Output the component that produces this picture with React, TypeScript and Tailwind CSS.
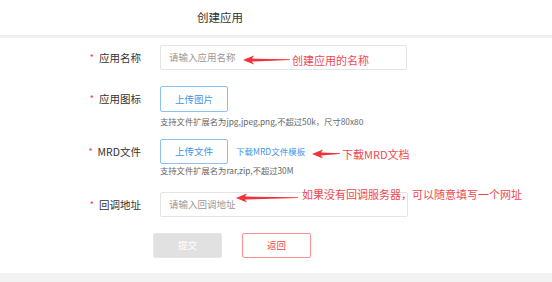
import React from 'react'

const font = { fontFamily: '"Noto Sans CJK SC", "Liberation Sans", sans-serif' }

function Arrow({ width }: { width: number }) {
  return (
    <svg width={width} height="10" viewBox={`0 0 ${width} 10`} className="block">
      <polygon points={`0,5 11,0.5 9,3.6 ${width},4.3 ${width},5 9,6.6 11,9.5`} fill="#f0333a" />
    </svg>
  )
}

function Label({ text }: { text: string }) {
  return (
    <div className="w-[160px] shrink-0 flex items-center justify-end pr-[19px] text-[10.5px] text-[#333]">
      <span className="text-[#f04134] text-[9px] mr-[5px]">*</span>
      <span>{text}</span>
    </div>
  )
}

export default function App() {
  return (
    <div className="relative w-[552px] h-[282px] bg-white overflow-hidden" style={font}>
      <div className="h-[35px] flex items-center pl-[197px] text-[11.5px] text-[#333]">创建应用</div>
      <div className="h-[3px] bg-[#f0f0f0]" />

      <div className="flex flex-col">
        <div className="flex items-center mt-[7px] h-[25px]">
          <Label text="应用名称" />
          <div className="w-[247px] h-[25px] border border-[#e4e4e4] rounded-[2px] flex items-center pl-[8px] text-[9.5px] text-[#999]">
            请输入应用名称
          </div>
        </div>

        <div className="flex items-center mt-[16px] h-[26px]">
          <Label text="应用图标" />
          <div className="w-[68px] h-[26px] border border-[#8cc2f3] rounded-[2px] flex items-center justify-center text-[9.5px] text-[#3f95e8]">
            上传图片
          </div>
        </div>
        <div className="pl-[160px] mt-[2px] h-[14px] flex items-center text-[8.3px] text-[#666]">
          支持文件扩展名为jpg,jpeg,png,不超过50k，尺寸80x80
        </div>

        <div className="flex items-center mt-[11px] h-[25px]">
          <Label text="MRD文件" />
          <div className="w-[68px] h-[25px] border border-[#8cc2f3] rounded-[2px] flex items-center justify-center text-[9.5px] text-[#3f95e8]">
            上传文件
          </div>
          <div className="ml-[8px] text-[8.5px] text-[#3f95e8]">下载MRD文件模板</div>
        </div>
        <div className="pl-[160px] h-[13px] flex items-center text-[8.3px] text-[#666]">
          支持文件扩展名为rar,zip,不超过30M
        </div>

        <div className="flex items-center mt-[15px] h-[25px]">
          <Label text="回调地址" />
          <div className="w-[248px] h-[25px] border border-[#e4e4e4] rounded-[2px] flex items-center pl-[8px] text-[9.5px] text-[#999]">
            请输入回调地址
          </div>
        </div>

        <div className="flex items-center mt-[16px] pl-[153px] gap-[20px]">
          <div className="w-[69px] h-[25px] rounded-[2px] bg-[#e1e1e1] border border-[#e6e6e6] flex items-center justify-center text-[9.5px] text-white">
            提交
          </div>
          <div className="w-[69px] h-[25px] rounded-[2px] border border-[#ff8e8e] flex items-center justify-center text-[9.5px] text-[#f04848]">
            返回
          </div>
        </div>
      </div>

      <div className="absolute left-0 right-0 bottom-0 h-[9px] bg-[#f2f2f2]" />

      <div className="absolute left-[243px] top-[52px] flex items-center">
        <Arrow width={47} />
        <span className="ml-[2px] text-[11px] text-[#f0474f]">创建应用的名称</span>
      </div>
      <div className="absolute left-[312px] top-[146px] flex items-center">
        <Arrow width={28} />
        <span className="ml-[2px] text-[11px] text-[#f0474f]">下载MRD文档</span>
      </div>
      <div className="absolute left-[236px] top-[193px] flex items-center">
        <Arrow width={62} />
        <span className="ml-[4px] -mt-[8px] text-[11px] text-[#f0474f]">如果没有回调服务器，可以随意填写一个网址</span>
      </div>
    </div>
  )
}
